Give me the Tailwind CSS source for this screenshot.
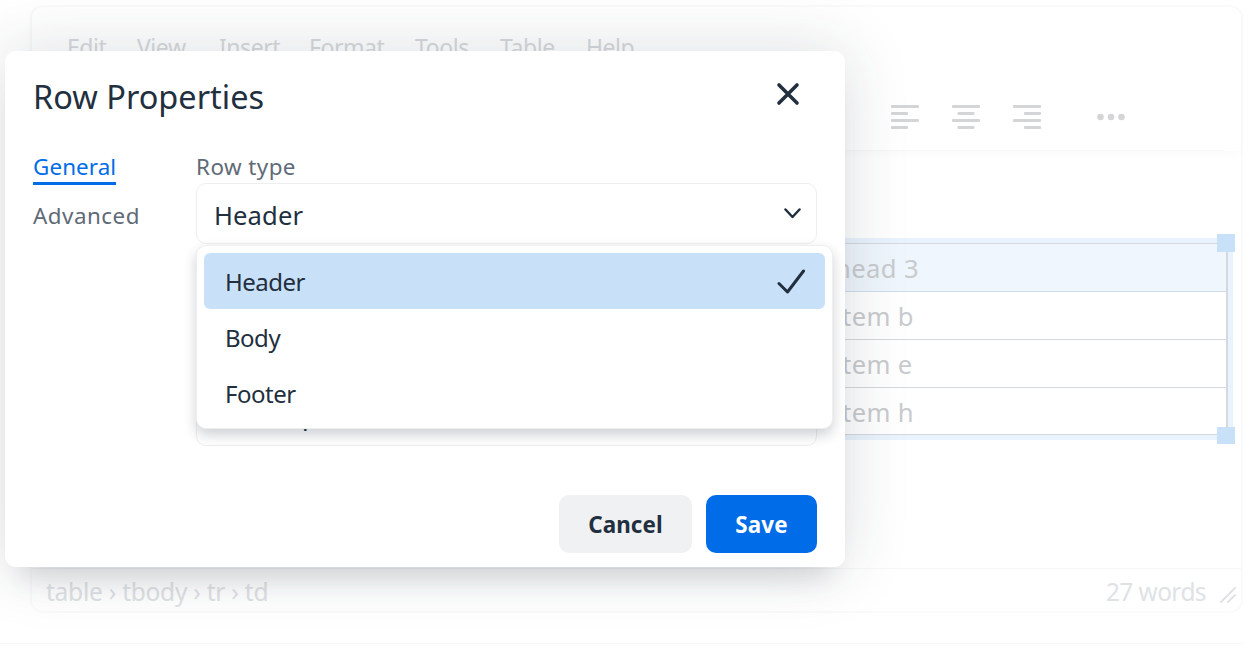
<!DOCTYPE html>
<html lang="en">
<head>
<meta charset="utf-8">
<title>Row Properties</title>
<script src="https://cdn.jsdelivr.net/npm/@tailwindcss/browser@4"></script>
</head>
<body class="bg-white overflow-hidden">
<div class="relative w-[1256px] h-[648px] overflow-hidden bg-white font-['Noto_Sans',sans-serif] pt-[5px] pl-[30px]">
  <div class="absolute left-0 top-[643px] w-[1245px] h-px bg-[#f6f7f8]"></div>

  <!-- Faded editor -->
  <div class="w-[1213px] h-[608px] rounded-[13px] border-2 border-[#fafafb] flex flex-col">
    <div class="h-[144px] relative flex flex-col shadow-[0_4px_8px_rgba(34,47,62,0.02)]">
      <div class="h-[56px] flex items-end pl-[35px] text-[23px] leading-[32px] text-[#d6d9dc] tracking-[-0.45px]">
        <span class="w-[70px]">Edit</span><span class="w-[82px]">View</span><span class="w-[90px]">Insert</span><span class="w-[106px]">Format</span><span class="w-[85px]">Tools</span><span class="w-[86px]">Table</span><span>Help</span>
      </div>
      <div class="flex-1 flex justify-end items-start pt-[42px] pr-[98px] border-b border-[#f8f8f9] mr-[18px]">
        <div class="flex items-start">
          <svg class="w-[28px] h-[24px]" viewBox="0 0 28 24" fill="#d4d5d7"><rect width="28" height="3" rx="1"/><rect y="7" width="17" height="3" rx="1"/><rect y="14" width="28" height="3" rx="1"/><rect y="21" width="17" height="3" rx="1"/></svg>
          <svg class="w-[28px] h-[24px] ml-[33px]" viewBox="0 0 28 24" fill="#d4d5d7"><rect width="28" height="3" rx="1"/><rect x="5.5" y="7" width="17" height="3" rx="1"/><rect y="14" width="28" height="3" rx="1"/><rect x="5.5" y="21" width="17" height="3" rx="1"/></svg>
          <svg class="w-[28px] h-[24px] ml-[33px]" viewBox="0 0 28 24" fill="#d4d5d7"><rect width="28" height="3" rx="1"/><rect x="11" y="7" width="17" height="3" rx="1"/><rect y="14" width="28" height="3" rx="1"/><rect x="11" y="21" width="17" height="3" rx="1"/></svg>
          <svg class="w-[28px] h-[24px] ml-[56px]" viewBox="0 0 28 24" fill="#d4d5d7"><circle cx="3.5" cy="12" r="3.3"/><circle cx="14" cy="12" r="3.3"/><circle cx="24.5" cy="12" r="3.3"/></svg>
        </div>
      </div>
    </div>

    <div class="flex-1 pt-[92px] pl-[14px] pr-[13px]">
      <div class="relative outline-[5px] outline-[#e9f3fd] border-t border-r-2 border-[#d5d8dc]">
        <div class="grid grid-cols-[1fr_1fr_394px] h-[48px] items-center bg-[#eff6fd] border-b border-[#cfdde9] text-[25.6px] text-[#c9cbce] pt-[3px] tracking-[0.4px]"><span></span><span></span><span class="pl-[3px]">head 3</span></div>
        <div class="grid grid-cols-[1fr_1fr_394px] h-[48px] items-center border-b border-[#d5d8dc] text-[25.6px] text-[#c9cbce] pt-[3px] tracking-[0.4px]"><span></span><span></span><span class="pl-[3px]">item b</span></div>
        <div class="grid grid-cols-[1fr_1fr_394px] h-[48px] items-center border-b border-[#d5d8dc] text-[25.6px] text-[#c9cbce] pt-[3px] tracking-[0.4px]"><span></span><span></span><span class="pl-[3px]">item e</span></div>
        <div class="grid grid-cols-[1fr_1fr_394px] h-[47px] items-center border-b border-[#d5d8dc] text-[25.6px] text-[#c9cbce] pt-[4px] tracking-[0.4px]"><span></span><span></span><span class="pl-[3px]">item h</span></div>
        <div class="absolute -right-[9px] -top-[10px] w-[18px] h-[18px] bg-[#c8e0f8]"></div>
        <div class="absolute -right-[9px] -bottom-[9px] w-[18px] h-[17px] bg-[#c8e0f8]"></div>
      </div>
    </div>

    <div class="h-[43px] border-t border-[#f6f7f8] flex items-center justify-between pl-[14px] pr-[5px] pt-[4px] text-[24.5px] text-[#dfe2e5] tracking-[-0.25px]">
      <span>table › tbody › tr › td</span>
      <span class="flex items-center gap-[14px] tracking-[-0.6px]">27 words
        <svg class="w-[16px] h-[16px] mt-[6px]" viewBox="0 0 16 16" fill="none" stroke="#e2e3e5" stroke-width="2" stroke-linecap="round"><path d="M1 15 15 1M8 15l7-7"/></svg>
      </span>
    </div>
  </div>

  <!-- Dialog -->
  <div class="absolute left-[5px] top-[51px] w-[840px] h-[516px] bg-white rounded-[11px] shadow-[0_26px_26px_-16px_rgba(34,47,62,0.15),0_0_64px_2px_rgba(34,47,62,0.15)] flex flex-col text-[#222f3e]">
    <div class="flex items-center justify-between h-[92px] pl-[28px] pr-[45px]">
      <h1 class="text-[32.5px] leading-[44px]">Row Properties</h1>
      <svg class="w-[24px] h-[24px] -mt-[6px]" viewBox="0 0 24 24" fill="none" stroke="#222f3e" stroke-width="3.6" stroke-linecap="round"><path d="M3 3l18 18M21 3 3 21"/></svg>
    </div>
    <div class="flex flex-1 relative">
      <div class="w-[191px] pl-[28px] flex flex-col items-start text-[22.4px] tracking-[0.1px]">
        <span class="text-[#006ce7] border-b-[3px] border-[#006ce7] h-[43px] leading-[49px] -mt-[1px]">General</span>
        <span class="text-[#5f6a77] mt-[11px] leading-[40px] tracking-[0.5px]">Advanced</span>
      </div>
      <div class="w-[621px] flex flex-col">
        <span class="text-[22.4px] text-[#5f6a77] leading-[30px] tracking-[0.45px] mt-[9px] h-[32px] block">Row type</span>
        <div class="-mt-[1px] h-[61px] border-[1.5px] border-[#eeeeee] rounded-[10px] flex items-center justify-between pl-[17px] pr-[15px] text-[25.6px] pt-[6px] tracking-[0.1px]">
          <span>Header</span>
          <svg class="w-[17px] h-[11px] mb-[6px]" viewBox="0 0 17 11" fill="none" stroke="#222f3e" stroke-width="2.5" stroke-linecap="round" stroke-linejoin="round"><path d="M1.5 1.5l7 7.5 7-7.5"/></svg>
        </div>
        <div class="mt-[140px] h-[62px] border-[1.5px] border-[#eeeeee] rounded-[10px] pl-[105px] pt-[2px] flex items-center text-[25.6px]">p</div>
      </div>

      <!-- Dropdown -->
      <div class="absolute left-[191px] top-[102px] w-[637px] h-[184px] bg-white rounded-[10px] border border-[#eeeeee] p-[7px] shadow-[0_6px_13px_0_rgba(34,47,62,0.22)] text-[24px] tracking-[-0.5px]">
        <div class="h-[56px] bg-[#c9e1f8] rounded-[6px] flex items-center justify-between pl-[21px] pr-[20px] pt-[2px]">
          <span>Header</span>
          <svg class="w-[28px] h-[25px] -mt-[2px]" viewBox="0 0 28 25" fill="none" stroke="#222f3e" stroke-width="3" stroke-linecap="round" stroke-linejoin="round"><path d="M2 14.5l8.5 8.5L26.5 2"/></svg>
        </div>
        <div class="h-[56px] flex items-center pl-[21px] pt-[2px]">Body</div>
        <div class="h-[56px] flex items-center pl-[21px] pt-[2px]">Footer</div>
      </div>
    </div>
    <div class="flex justify-end gap-[14px] pr-[28px] pb-[14px] text-[22.4px] font-bold tracking-[0.1px]">
      <button class="w-[133px] h-[58px] rounded-[10px] bg-[#f0f1f2] text-[#222f3e] pt-[2px]">Cancel</button>
      <button class="w-[111px] h-[58px] rounded-[10px] bg-[#006ce7] text-white pt-[2px]">Save</button>
    </div>
  </div>
</div>
</body>
</html>
